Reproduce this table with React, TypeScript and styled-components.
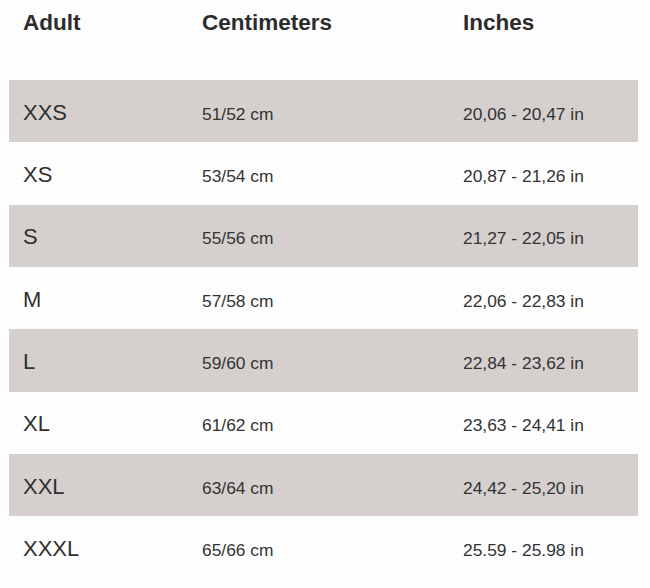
import React from "react";
import styled, { createGlobalStyle } from "styled-components";

const Global = createGlobalStyle`
  html, body {
    margin: 0;
    padding: 0;
    background: #fdfdfd;
  }
  body {
    font-family: "Liberation Sans", Arial, Helvetica, sans-serif;
    color: #333;
  }
`;

const Table = styled.div`
  padding: 0 12px 0 9px;
  width: 650px;
  box-sizing: border-box;
`;

const HeaderRow = styled.div`
  display: grid;
  grid-template-columns: 179px 261px 1fr;
  align-items: baseline;
  height: 80px;
  box-sizing: border-box;
  padding: 12px 0 0 14px;
`;

const HeadCell = styled.div`
  font-size: 22.5px;
  font-weight: 700;
  line-height: 1;
  color: #2c2c2c;
`;

const Row = styled.div<{ $shaded: boolean }>`
  display: grid;
  grid-template-columns: 179px 261px 1fr;
  align-items: baseline;
  height: 62.33px;
  box-sizing: border-box;
  padding: 21.7px 0 0 14px;
  background: ${(p) => (p.$shaded ? "#d5d0cd" : "transparent")};
`;

const SizeCell = styled.div`
  font-size: 22px;
  line-height: 1;
  color: #303030;
`;

const ValueCell = styled.div`
  font-size: 17.4px;
  line-height: 1;
  color: #333;
`;

const rows: [string, string, string][] = [
  ["XXS", "51/52 cm", "20,06 - 20,47 in"],
  ["XS", "53/54 cm", "20,87 - 21,26 in"],
  ["S", "55/56 cm", "21,27 - 22,05 in"],
  ["M", "57/58 cm", "22,06 - 22,83 in"],
  ["L", "59/60 cm", "22,84 - 23,62 in"],
  ["XL", "61/62 cm", "23,63 - 24,41 in"],
  ["XXL", "63/64 cm", "24,42 - 25,20 in"],
  ["XXXL", "65/66 cm", "25.59 - 25.98 in"],
];

export default function App() {
  return (
    <>
      <Global />
      <Table>
        <HeaderRow>
          <HeadCell>Adult</HeadCell>
          <HeadCell>Centimeters</HeadCell>
          <HeadCell>Inches</HeadCell>
        </HeaderRow>
        {rows.map(([size, cm, inch], i) => (
          <Row key={size} $shaded={i % 2 === 0}>
            <SizeCell>{size}</SizeCell>
            <ValueCell>{cm}</ValueCell>
            <ValueCell>{inch}</ValueCell>
          </Row>
        ))}
      </Table>
    </>
  );
}
